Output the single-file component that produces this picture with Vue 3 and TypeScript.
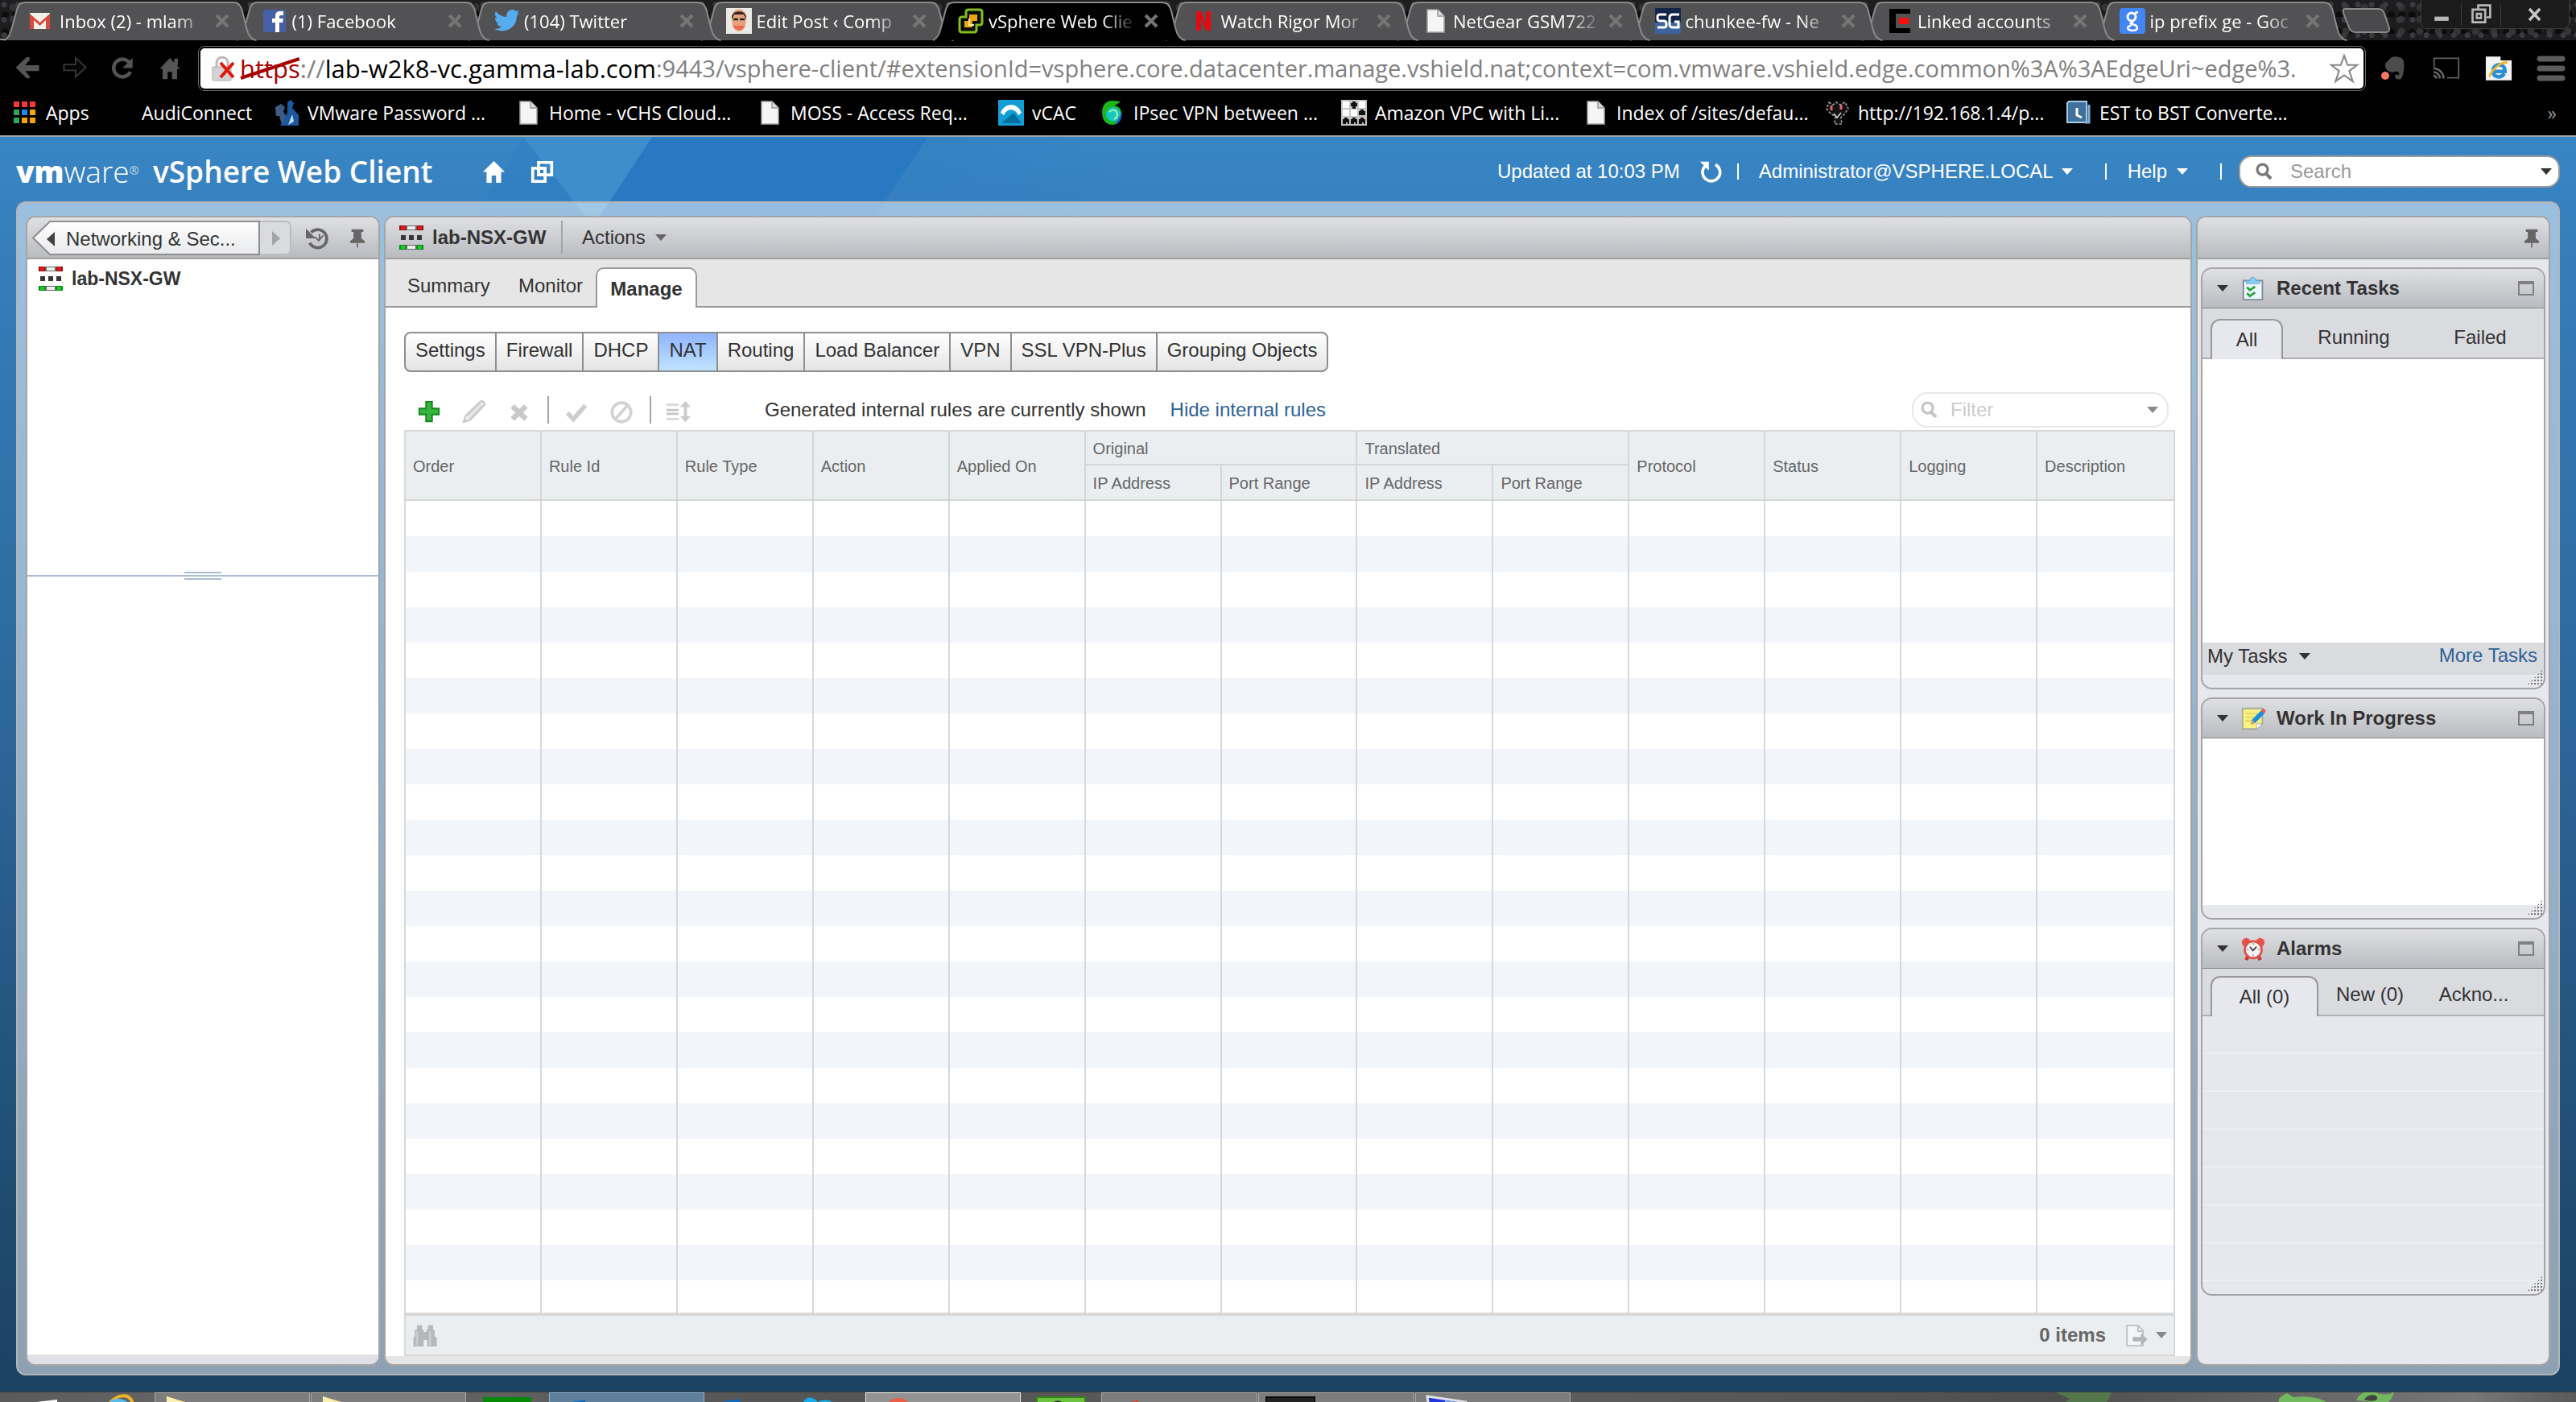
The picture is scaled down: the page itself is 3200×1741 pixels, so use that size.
<script setup lang="ts">
import { ref } from 'vue'

interface BrowserTab { title: string; icon: string; active?: boolean }
interface Bookmark { label: string; icon: string; width: number }
interface TaskItem { width: number; kind: string; icon: string }

const icons: Record<string, string> = {
  gmail: '<rect x="1" y="6" width="25" height="20" fill="#f0efe8"/><path d="M1 26V7l12.500 11L26 7v19h-5V15l-7.500 7L6 15v11z" fill="#d9483b"/>',
  facebook: '<rect x="2" y="2" width="28" height="28" rx="3" fill="#4760a5"/><path d="M17 30V18h-4v-5h4v-3c0-4 2-6 6-6h4v5h-3c-2 0-2 1-2 2v2h5l-1 5h-4v12z" fill="#fff"/>',
  twitter: '<path d="M1 26c4 0 7-1 9-3-3 0-5-2-6-4h3c-3-1-5-3-5-7l3 1C2 10 1 7 3 4c3 4 8 7 13 7 0-9 8-11 12-7l4-1-3 4 3-1-3 4C29 24 15 33 1 26z" fill="#55acee"/>',
  face: '<rect width="32" height="32" fill="#eceae6"/><path d="M7 12c0-14 18-14 18 0l-1 10c-3 9-13 9-16 0z" fill="#e8a07c"/><path d="M7 14C5 1 27 1 25 14l-3-6H10z" fill="#33251f"/><path d="M9 14h6M17 14h6" stroke="#222" stroke-width="2.500"/><path d="M9 22c3 7 11 7 14 0z" fill="#ec6a50"/>',
  vsphere: '<path d="M13 2h14q3 0 3 3v13q0 3-3 3h-4v6q0 3-3 3H5q-3 0-3-3V14q0-3 3-3h5V5q0-3 3-3z" fill="#0c0c0c" stroke="#82bd1d" stroke-width="3"/><path d="M14 8h10v8H14zM8 16h10v8H8z" fill="#f2a40c"/><path d="M14 13v8h6" fill="none" stroke="#fff0b0" stroke-width="2"/>',
  netflix: '<path d="M7 4h6l6 15V4h6v24h-6l-6-15v15H7z" fill="#e50914"/>',
  page: '<path d="M6 2h13l8 8v20H6z" fill="#f5f5f5" stroke="#a5a5a5" stroke-width="1.500"/><path d="M19 2v8h8" fill="#ddd" stroke="#999" stroke-width="1.500"/>',
  sg: '<rect width="32" height="32" fill="#13264a"/><rect y="18" width="32" height="14" fill="#3c63a0"/><path d="M14 8H6q-3 0-3 3v2q0 3 3 3h5q3 0 3 3v2q0 3-3 3H3M30 8h-8q-4 0-4 4v8q0 4 4 4h7v-7h-5" fill="none" stroke="#fff" stroke-width="3"/>',
  linked: '<path d="M3 1h26v6H11v18h18v6H3z" fill="#000"/><rect x="15" y="12" width="12" height="8" fill="#ff0d0d"/>',
  google: '<rect width="32" height="32" rx="4" fill="#4285f4"/><circle cx="15" cy="11" r="5" fill="none" stroke="#fff" stroke-width="3"/><path d="M19 6l4-1M17 16l-3 3 7 3q3 6-5 6-8-1-5-5l4-2" fill="none" stroke="#fff" stroke-width="2.500"/>',
  apps: '<path d="M2 2h7v7H2zM12 2h7v7h-7zM22 2h7v7h-7z" fill="#f4392e"/><path d="M2 12h7v7H2zM2 22h7v7H2z" fill="#2fa45b"/><path d="M12 12h7v7h-7z" fill="#1a87f5"/><path d="M22 12h7v7h-7zM12 22h7v7h-7zM22 22h7v7h-7z" fill="#f7a600"/>',
  blank: '',
  people: '<path d="M2 9l7-4 5 4-2 6 3 4v12h-5L7 20H3z" fill="#3e5b83"/><path d="M17 3l4-3 4 4-2 6 8 9v13H8l6-9 3-8z" fill="#1c58a0"/><path d="M18 31l5-13 2 9z" fill="#c8d8ec"/>',
  vcac: '<rect width="32" height="32" fill="#129fd6"/><path d="M3 16C8 3 24 3 29 16l-4 3c-4-9-14-9-18 0z" fill="#fff"/><path d="M4 29l15-13 10 13z" fill="#056f9f"/>',
  ball: '<path d="M16 1C3 1 2 14 4 22c3 11 18 12 22 2 4-8-1-18-8-16l8-6z" fill="#18b818"/><circle cx="17" cy="18" r="9" fill="#15c7c0"/><path d="M27 15c2 8-3 15-9 16 4-4 6-8 9-16z" fill="#215bd8"/><path d="M12 15q6-5 9 0t-3 9" fill="none" stroke="#a8f5a0" stroke-width="2"/>',
  amazon: '<rect width="32" height="32" fill="#c4c4c4"/><path d="M2 2h8v8H2zM22 2h8v8h-8zM2 12h8v8H2zM12 12h8v8h-8z" fill="#fff"/><path d="M12 4h2V2h4v2h2v4h-2v3h-4V8h-2zM22 14h2v-2h4v2h2v5h-8zM2 24h2v-2h4v2h2v6H8v-2H6v2H2zM12 24h2v-2h4v2h2v6h-2v-2h-2v2h-4zM22 24h2v-2h4v2h2v6h-2v-2h-2v2h-4z" fill="#111"/>',
  thorn: '<path d="M6 3l5 3 4-3 5 3 6-3 4 8-5 7-4 4 1 8h-9l1-9-6-4-5-6z" fill="#141111" stroke="#aaa" stroke-width="1.500" stroke-dasharray="3 2"/><path d="M9 7v6M21 6v6" stroke="#e06a6a" stroke-width="3"/><path d="M12 17l4 5 5-6" fill="none" stroke="#ddd" stroke-width="1.500"/>',
  clock: '<path d="M4 2h22v26H2V4z" fill="#40719c" stroke="#a5cbea" stroke-width="2"/><path d="M14 10v9l6 3" fill="none" stroke="#fff" stroke-width="3"/><path d="M24 28h5V6" fill="none" stroke="#7fb0dc" stroke-width="3"/>',
  edge: '<path d="M0 0h30v6H0z" fill="#8c1410"/><path d="M2 1h5v4H2zM23 1h5v4h-5z" fill="#f21313"/><path d="M8 0h14v6H8z" fill="#666"/><path d="M10 1h10v4H10z" fill="#eee"/><path d="M2 12h6v6H2zM12 12h6v6h-6zM22 12h6v6h-6z" fill="#363636"/><path d="M0 24h30v6H0z" fill="#088a12"/><path d="M2 25h5v4H2zM23 25h5v4h-5z" fill="#0fd321"/><path d="M8 24h14v6H8z" fill="#666"/><path d="M10 25h10v4H10z" fill="#eee"/>',
  tasks: '<path d="M3 5h26v26H3z" fill="#eaf5fd" stroke="#7f8a94" stroke-width="2"/><path d="M7 9V5h5c0-6 8-6 8 0h5v4z" fill="#8dcdf3" stroke="#559fce"/><path d="M8 14l4 4 7-5M8 22l4 4 7-5" fill="none" stroke="#29a336" stroke-width="3"/>',
  note: '<path d="M2 2h27v20l-8 8H2z" fill="#fbf37f" stroke="#a9a9a0" stroke-width="2"/><path d="M6 9h16M6 14h12M6 19h9" stroke="#ded36c" stroke-width="2"/><path d="M21 30v-7h8z" fill="#fff" stroke="#aaa"/><path d="M13 24l2-7L27 5l5 4-13 13z" fill="#1d8edd"/><path d="M27 5l3-3 4 3-2 4z" fill="#e3576c"/><path d="M13 24l2-7 4 5z" fill="#d9a469"/>',
  alarm: '<circle cx="7" cy="7" r="6" fill="#e8514c"/><circle cx="26" cy="7" r="6" fill="#e8514c"/><path d="M7 31l3-7M26 31l-3-7" stroke="#c53c37" stroke-width="5"/><circle cx="16.500" cy="17" r="13" fill="#e0504a"/><circle cx="16.500" cy="17" r="10" fill="#f7f4f2"/><path d="M12 13l4 5 5-5" fill="none" stroke="#444" stroke-width="2"/><path d="M16.500 8v2M16.500 24v2M8 17h2M23 17h2" stroke="#777" stroke-width="1.500"/>',
  search: '<circle cx="13" cy="13" r="8" fill="none" stroke="currentColor" stroke-width="4"/><path d="M18 19l8 8" stroke="currentColor" stroke-width="5"/>',
  pin: '<path d="M7 2h18v4h-3v10l5 4v3H5v-3l5-4V6H7z" fill="#666"/><path d="M15 23h2v7h-2z" fill="#666"/>',
  history: '<path d="M7 8a12 12 0 1 1-2 14" fill="none" stroke="#666" stroke-width="4"/><path d="M0 3v13h13z" fill="#666"/><path d="M18 10v8M12 14l5 5 6-7" fill="none" stroke="#666" stroke-width="2"/>',
  plus: '<path d="M12 3h8v9h9v8h-9v9h-8v-9H3v-8h9z" fill="#35b53c" stroke="#12861c" stroke-width="2"/>',
  pencil: '<path d="M2 30l3-9L24 3q3-2 5 1 2 2 0 4L11 27z" fill="#eee" stroke="#c5c5c5" stroke-width="2"/><path d="M7 22L25 5M10 25L27 8" stroke="#d0d0d0" stroke-width="1.500"/>',
  cross: '<path d="M7 9l18 17M25 9L7 26" stroke="#c9c9c9" stroke-width="7"/>',
  check: '<path d="M4 18l8 8L28 8" fill="none" stroke="#cdcdcd" stroke-width="6"/>',
  ban: '<circle cx="16" cy="17" r="12.500" fill="none" stroke="#d2d2d2" stroke-width="4"/><path d="M8 26L24 8" stroke="#d2d2d2" stroke-width="4"/>',
  sort: '<path d="M0 7h16M0 26h16" stroke="#d8d8d8" stroke-width="3"/><path d="M0 14h16M0 19h16" stroke="#c4c4c4" stroke-width="3"/><path d="M25 2l7 8h-5v12h5l-7 8-7-8h5V10h-5z" fill="#cbcbcb"/>',
  binoculars: '<path d="M5 2h7v6h2v3h4V8h2V2h7v6h2v10h3v13H19v-9h-5v9H0V18h2V8h3z" fill="#b5b7b9"/><path d="M5 10v20M23 10v20" stroke="#cacccd" stroke-width="3"/>',
  export: '<path d="M3 2h15l7 7v21H3z" fill="#f4f5f6" stroke="#bdbfc1" stroke-width="2"/><path d="M18 2v8h7" fill="none" stroke="#bdbfc1" stroke-width="2"/><path d="M11 18h11v-5l9 8-9 9v-6H11z" fill="#b2b4b6"/>',
  back: '<path d="M0 14L15 0h4v4l-6 7h19v8H13l6 7v3h-4z" fill="#555"/>',
  forward: '<path d="M31 14L17 1v9H1v8h16v9z" fill="#050505" stroke="#383838" stroke-width="2"/>',
  reload: '<path d="M26 8A12 12 0 1 0 27 20" fill="none" stroke="#545454" stroke-width="5"/><path d="M30 1v14H16z" fill="#545454"/>',
  home: '<path d="M16 1l14 15h-4v14h-7V20h-6v10H6V16H2z" fill="currentColor"/><path d="M22 2h5v9h-5z" fill="currentColor"/>',
  lock: '<path d="M8 15V9c0-9 14-9 14 0v6" fill="none" stroke="#b9b9b9" stroke-width="3"/><rect x="3" y="14" width="23" height="17" rx="1" fill="#d3d3d3" stroke="#aaa"/><path d="M13 9l16 18M29 9L13 27" stroke="#e2150c" stroke-width="4"/>',
  star: '<path d="M16 1l4 11h11l-9 7 4 12-10-7-10 7 4-12-9-7h11z" fill="#fff" stroke="#888" stroke-width="2"/>',
  elephant: '<path d="M5 10l8-8c6-2 14 0 15 5 1 7 0 14-2 20-2 4-9 3-9-1 0-3 4-3 4-1 4-5-2-6-4-5-4 2-13 0-12-10z" fill="#4c4c4c"/><circle cx="5" cy="25" r="5" fill="#f27a62"/>',
  cast: '<path d="M2 14V2h34v27H20" fill="none" stroke="#606060" stroke-width="2"/><path d="M1 16a14 14 0 0 1 14 14M1 21a9 9 0 0 1 9 9M1 26a4 4 0 0 1 4 4" fill="none" stroke="#666" stroke-width="3"/>',
  ie: '<path d="M1 0h20v5h15v27H1z" fill="#f3f3f3"/><path d="M10 20h17c0-12-16-12-16 0 0 8 11 10 15 3" fill="none" stroke="#2a8ed8" stroke-width="5"/><path d="M7 27C4 24 20 6 30 8" fill="none" stroke="#f3b51e" stroke-width="3"/>',
  menu: '<path d="M2 4h28M2 16h28M2 28h28" stroke="#5c5c5c" stroke-width="7" stroke-linecap="round"/>',
  windows: '<path d="M11 3h18v17H11z" fill="none" stroke="#fff" stroke-width="4"/><path d="M3 11h17v18H3z" fill="none" stroke="#fff" stroke-width="4"/><path d="M11 11h9v9h-9z" fill="none" stroke="#fff" stroke-width="4"/>',
  refresh: '<path d="M22 6a12 12 0 1 1-14 2" fill="none" stroke="#fff" stroke-width="4"/><path d="M1 2h12v12z" fill="#fff"/>',
  restore: '<path d="M12 8V3h17v17h-5M4 9h18v18H4zM10 15h6v6h-6z" fill="none" stroke="#b9b9b9" stroke-width="3"/>',
  tStart: '<path d="M45 12l26-3v8H40z" fill="#fff"/>',
  tIe: '<path d="M40 15C50 2 66 0 70 14" fill="none" stroke="#efb32a" stroke-width="4"/><path d="M40 16c6-8 18-8 24 0" fill="none" stroke="#54bdee" stroke-width="4"/>',
  tFolder: '<path d="M14 4l37 11v5H14z" fill="#f1e08c"/><path d="M14 4l24 9v4H14z" fill="#faf0b4"/>',
  tStore: '<path d="M21 6h60v12H21z" fill="#048a04"/><path d="M46 12h6v6h-6z" fill="#fff"/>',
  tMail: '<path d="M16 13l28-5v9H16z" fill="#0a6cc2"/>',
  tCloud: '<path d="M22 17c4-14 14-12 20-5 10-5 20-2 22 6z" fill="#13adee"/>',
  tChrome: '<circle cx="40" cy="22" r="16" fill="#ef5b47"/>',
  tEver: '<path d="M20 6h60v12H20z" fill="#6cc33c" stroke="#3a7f20" stroke-width="2"/><path d="M38 18c0-10 16-10 16 0z" fill="#222"/>',
  tOffice: '<path d="M22 13l23-4v8H22z" fill="#d8432a"/>',
  tDark: '<path d="M9 5h60v12H9z" fill="#222" stroke="#0c0c0c" stroke-width="2"/>',
  tPc: '<path d="M14 4l48 7v8H16z" fill="#1f35dd" stroke="#e3e3e3" stroke-width="3"/><path d="M36 9l24 3v8H36z" fill="#7fa4ef"/>',
}

const tabs: BrowserTab[] = [
  { title: 'Inbox (2) - mlam', icon: 'gmail' },
  { title: '(1) Facebook', icon: 'facebook' },
  { title: '(104) Twitter', icon: 'twitter' },
  { title: 'Edit Post ‹ Comp', icon: 'face' },
  { title: 'vSphere Web Clie', icon: 'vsphere', active: true },
  { title: 'Watch Rigor Mor', icon: 'netflix' },
  { title: 'NetGear GSM722', icon: 'page' },
  { title: 'chunkee-fw - Ne', icon: 'sg' },
  { title: 'Linked accounts', icon: 'linked' },
  { title: 'ip prefix ge - Goc', icon: 'google' },
]

const bookmarks: Bookmark[] = [
  { label: 'Apps', icon: 'apps', width: 119 },
  { label: 'AudiConnect', icon: 'blank', width: 206 },
  { label: 'VMware Password ...', icon: 'people', width: 300 },
  { label: 'Home - vCHS Cloud...', icon: 'page', width: 300 },
  { label: 'MOSS - Access Req...', icon: 'page', width: 300 },
  { label: 'vCAC', icon: 'vcac', width: 126 },
  { label: 'IPsec VPN between ...', icon: 'ball', width: 300 },
  { label: 'Amazon VPC with Li...', icon: 'amazon', width: 300 },
  { label: 'Index of /sites/defau...', icon: 'page', width: 300 },
  { label: 'http://192.168.1.4/p...', icon: 'thorn', width: 300 },
  { label: 'EST to BST Converte...', icon: 'clock', width: 300 },
]

const taskbar: TaskItem[] = [
  { width: 95, kind: 'plain', icon: 'tStart' },
  { width: 97, kind: 'plain', icon: 'tIe' },
  { width: 193, kind: 'open', icon: 'tFolder' },
  { width: 193, kind: 'open', icon: 'tFolder' },
  { width: 103, kind: 'plain', icon: 'tStore' },
  { width: 193, kind: 'open blue', icon: 'tMail' },
  { width: 99, kind: 'plain', icon: 'tMail' },
  { width: 101, kind: 'plain', icon: 'tCloud' },
  { width: 193, kind: 'open lit', icon: 'tChrome' },
  { width: 100, kind: 'plain', icon: 'tEver' },
  { width: 194, kind: 'open', icon: 'tOffice' },
  { width: 194, kind: 'open', icon: 'tDark' },
  { width: 193, kind: 'open', icon: 'tPc' },
]

const sections = ['Settings', 'Firewall', 'DHCP', 'NAT', 'Routing', 'Load Balancer', 'VPN', 'SSL VPN-Plus', 'Grouping Objects']
const section = ref('NAT')
const urlRest = ref(':9443/vsphere-client/#extensionId=vsphere.core.datacenter.manage.vshield.nat;context=com.vmware.vshield.edge.common%3A%3AEdgeUri~edge%3.')
</script>

<template>
  <div class="screen">
    <header class="chrome">
      <div class="strip">
        <div class="tabs">
          <button v-for="(t, i) in tabs" :key="t.title" class="tab" :class="{ active: t.active }" :style="{ zIndex: t.active ? 20 : 10 - i }">
            <svg class="shape" viewBox="0 0 314 50" preserveAspectRatio="none">
              <path d="M0 50C6 47 8 42 10 34L16 12C18 5 20 3 27 3H284C291 3 293 5 296 12L302 36C304 44 307 49 314 50" />
            </svg>
            <svg class="i32" viewBox="0 0 32 32" v-html="icons[t.icon]"></svg>
            <span class="tab-title">{{ t.title }}</span>
            <svg class="close" viewBox="0 0 18 18"><path d="M2 2L16 16M16 2L2 16" /></svg>
          </button>
        </div>
        <div class="win">
          <svg class="newtab" viewBox="0 0 64 32"><path d="M5 1H46Q52 1 54 7L60 25Q61 30 56 30H18Q12 30 10 24L3 6Q2 1 5 1" /></svg>
          <div class="win-buttons">
            <button aria-label="Minimize"><svg viewBox="0 0 32 32"><path d="M6 22h20" stroke="#b9b9b9" stroke-width="6" /></svg></button>
            <button aria-label="Restore"><svg viewBox="0 0 32 32" v-html="icons.restore"></svg></button>
            <button aria-label="Close"><svg viewBox="0 0 32 32"><path d="M8 8l15 16M23 8L8 24" stroke="#c4c4c4" stroke-width="4" /></svg></button>
          </div>
        </div>
      </div>
      <div class="toolbar">
        <button class="nav" aria-label="Back"><svg viewBox="0 0 32 32" v-html="icons.back"></svg></button>
        <button class="nav" aria-label="Forward"><svg viewBox="0 0 32 32" v-html="icons.forward"></svg></button>
        <button class="nav" aria-label="Reload"><svg viewBox="0 0 32 32" v-html="icons.reload"></svg></button>
        <button class="nav" aria-label="Home"><svg viewBox="0 0 32 32" v-html="icons.home"></svg></button>
        <div class="omnibox">
          <svg class="i32" viewBox="0 0 32 32" v-html="icons.lock"></svg>
          <span class="scheme">https<svg viewBox="0 0 70 28" preserveAspectRatio="none"><path d="M1 26L69 2" /></svg></span>
          <span class="sep">://</span>
          <span class="host">lab-w2k8-vc.gamma-lab.com</span>
          <input v-model="urlRest" class="rest" aria-label="Address" />
          <svg class="star" viewBox="0 0 32 32" v-html="icons.star"></svg>
        </div>
        <div class="exts">
          <svg viewBox="0 0 32 32" v-html="icons.elephant"></svg>
          <svg viewBox="0 0 38 32" v-html="icons.cast"></svg>
          <svg viewBox="0 0 37 32" v-html="icons.ie"></svg>
          <svg viewBox="0 0 32 32" v-html="icons.menu"></svg>
        </div>
      </div>
      <nav class="bookmarks">
        <a v-for="b in bookmarks" :key="b.label" href="#" :style="{ width: b.width + 'px' }">
          <svg class="i32" viewBox="0 0 32 32" v-html="icons[b.icon]"></svg>{{ b.label }}
        </a>
        <button class="more">»</button>
      </nav>
    </header>

    <main class="app">
      <svg class="rays" viewBox="0 0 1400 108" preserveAspectRatio="none">
        <defs>
          <linearGradient id="fade"><stop stop-color="#2f7dc2" /><stop offset="1" stop-color="#2f7dc2" stop-opacity="0" /></linearGradient>
        </defs>
        <path d="M1080 0H1400V108H1080z" fill="url(#fade)" opacity=".5" />
        <path d="M810 0H1153L1080 108H740z" fill="#2979c2" />
        <path d="M650 0L585 108H735z" fill="#2b7cc2" opacity=".35" />
        <path d="M650 0H810L738 108H735z" fill="#3f8ecc" />
      </svg>
      <div class="brand">
        <span class="logo"><b>vm</b>ware<sup>®</sup></span>
        <span class="product">vSphere Web Client</span>
        <button class="hi" aria-label="Home"><svg viewBox="0 0 32 32"><path d="M16 1l15 15h-5v15h-7V21h-6v10H6V16H1z" fill="#fff" /></svg></button>
        <button class="hi" aria-label="Windows"><svg viewBox="0 0 32 32" v-html="icons.windows"></svg></button>
        <div class="account">
          <span>Updated at 10:03 PM</span>
          <button class="hi refresh" aria-label="Refresh"><svg viewBox="0 0 32 32" v-html="icons.refresh"></svg></button>
          <i class="bar"></i>
          <button class="drop user">Administrator@VSPHERE.LOCAL<svg class="arr" viewBox="0 0 14 8"><path d="M0 0h14l-7 8z" /></svg></button>
          <i class="bar"></i>
          <button class="drop help">Help<svg class="arr" viewBox="0 0 14 8"><path d="M0 0h14l-7 8z" /></svg></button>
          <i class="bar"></i>
        </div>
        <label class="search">
          <svg viewBox="0 0 32 32" v-html="icons.search"></svg>
          <input placeholder="Search" aria-label="Search" />
          <svg class="arr" viewBox="0 0 14 8"><path d="M0 0h14l-7 8z" /></svg>
        </label>
      </div>

      <div class="frame">
        <aside class="panel left">
          <div class="head">
            <div class="crumb">
              <svg class="crumb-shape" viewBox="0 0 322 44" preserveAspectRatio="none">
                <defs><linearGradient id="cg" x2="0" y2="1"><stop stop-color="#fff" /><stop offset="1" stop-color="#e8e9eb" /></linearGradient></defs>
                <path d="M282 1H314Q321 1 321 8V35Q321 42 314 42H282z" fill="#d9dbdf" stroke="#bcbdc1" stroke-width="2" />
                <path d="M282 1H22L1 21.500L22 42H282z" fill="url(#cg)" stroke="#8d8d8d" stroke-width="2" />
              </svg>
              <button class="back"><svg viewBox="0 0 10 18"><path d="M10 0v18L0 9z" /></svg>Networking &amp; Sec...</button>
              <button class="next" aria-label="Forward"><svg viewBox="0 0 10 18"><path d="M0 0v18l10-9z" /></svg></button>
            </div>
            <button class="hist" aria-label="History"><svg viewBox="0 0 32 32" v-html="icons.history"></svg></button>
            <button class="pin" aria-label="Pin"><svg viewBox="0 0 32 32" v-html="icons.pin"></svg></button>
          </div>
          <div class="tree">
            <a href="#"><svg class="i30" viewBox="0 0 30 30" v-html="icons.edge"></svg>lab-NSX-GW</a>
          </div>
          <div class="splitter"><i></i></div>
          <div class="below"></div>
          <div class="foot"></div>
        </aside>

        <section class="panel center">
          <div class="head">
            <svg class="i30" viewBox="0 0 30 30" v-html="icons.edge"></svg>
            <h1>lab-NSX-GW</h1>
            <button class="drop actions">Actions<svg class="arr" viewBox="0 0 14 8"><path d="M0 0h14l-7 8z" /></svg></button>
          </div>
          <nav class="main-tabs">
            <button>Summary</button><button>Monitor</button><button class="on">Manage</button><i></i>
          </nav>
          <div class="content">
            <div class="sections">
              <button v-for="s in sections" :key="s" :class="{ on: s === section }" @click="section = s">{{ s }}</button>
            </div>
            <div class="tools">
              <button aria-label="Add"><svg viewBox="0 0 32 32" v-html="icons.plus"></svg></button>
              <button aria-label="Edit"><svg viewBox="0 0 32 32" v-html="icons.pencil"></svg></button>
              <button aria-label="Delete"><svg viewBox="0 0 32 32" v-html="icons.cross"></svg></button>
              <i></i>
              <button aria-label="Enable"><svg viewBox="0 0 32 32" v-html="icons.check"></svg></button>
              <button aria-label="Disable"><svg viewBox="0 0 32 32" v-html="icons.ban"></svg></button>
              <i></i>
              <button aria-label="Reorder"><svg viewBox="0 0 32 32" v-html="icons.sort"></svg></button>
              <span class="msg">Generated internal rules are currently shown</span>
              <a href="#">Hide internal rules</a>
              <label class="filter">
                <svg viewBox="0 0 32 32" v-html="icons.search"></svg>
                <input placeholder="Filter" aria-label="Filter" />
                <svg class="arr" viewBox="0 0 14 8"><path d="M0 0h14l-7 8z" /></svg>
              </label>
            </div>
            <div class="grid">
              <div class="rows">
                <table>
                  <thead>
                    <tr>
                      <th rowspan="2">Order</th><th rowspan="2">Rule Id</th><th rowspan="2">Rule Type</th>
                      <th rowspan="2">Action</th><th rowspan="2">Applied On</th>
                      <th colspan="2">Original</th><th colspan="2">Translated</th>
                      <th rowspan="2">Protocol</th><th rowspan="2">Status</th><th rowspan="2">Logging</th><th rowspan="2" class="last">Description</th>
                    </tr>
                    <tr><th>IP Address</th><th>Port Range</th><th>IP Address</th><th>Port Range</th></tr>
                  </thead>
                  <tbody>
                    <tr v-for="r in 23" :key="r"><td v-for="c in 13" :key="c"></td></tr>
                  </tbody>
                </table>
              </div>
              <div class="grid-foot">
                <button aria-label="Find"><svg viewBox="0 0 32 32" v-html="icons.binoculars"></svg></button>
                <strong>0 items</strong>
                <button class="exp" aria-label="Export"><svg viewBox="0 0 32 32" v-html="icons.export"></svg><svg class="arr" viewBox="0 0 14 8"><path d="M0 0h14l-7 8z" /></svg></button>
              </div>
            </div>
          </div>
          <div class="foot"></div>
        </section>

        <aside class="panel right">
          <div class="head"><button class="pin" aria-label="Pin"><svg viewBox="0 0 32 32" v-html="icons.pin"></svg></button></div>
          <div class="portlets">
            <section class="portlet tasks">
              <h2><svg class="arr" viewBox="0 0 14 8"><path d="M0 0h14l-7 8z" /></svg><svg class="i32" viewBox="0 0 34 32" v-html="icons.tasks"></svg>Recent Tasks<i class="max"></i></h2>
              <div class="ptabs three"><button class="on">All</button><button>Running</button><button>Failed</button><i></i></div>
              <div class="white"></div>
              <div class="links"><button class="drop">My Tasks<svg class="arr" viewBox="0 0 14 8"><path d="M0 0h14l-7 8z" /></svg></button><a href="#">More Tasks</a></div>
              <div class="grip"><i></i></div>
            </section>
            <section class="portlet work">
              <h2><svg class="arr" viewBox="0 0 14 8"><path d="M0 0h14l-7 8z" /></svg><svg class="i32" viewBox="0 0 34 32" v-html="icons.note"></svg>Work In Progress<i class="max"></i></h2>
              <div class="white"></div>
              <div class="grip"><i></i></div>
            </section>
            <section class="portlet alarms">
              <h2><svg class="arr" viewBox="0 0 14 8"><path d="M0 0h14l-7 8z" /></svg><svg class="i32" viewBox="0 0 34 32" v-html="icons.alarm"></svg>Alarms<i class="max"></i></h2>
              <div class="ptabs wide"><button class="on">All (0)</button><button>New (0)</button><button>Ackno...</button><i></i></div>
              <div class="lines"></div>
              <div class="grip"><i></i></div>
            </section>
          </div>
        </aside>
      </div>
    </main>

    <footer class="taskbar">
      <button v-for="(t, i) in taskbar" :key="i" :class="t.kind" :style="{ width: t.width + 'px' }" aria-label="Window">
        <svg viewBox="0 0 100 13" v-html="icons[t.icon]"></svg>
      </button>
      <svg class="splash" viewBox="0 0 700 13">
        <path d="M60 0h70l-6 13H72l6-5z" fill="#55804c" opacity=".8" />
        <path d="M338 13c-2-6 4-9 10-12l8 5c14-2 34 0 42 7zM434 10c4-10 16-14 24-10 10 5 22 2 24-2-4 10-6 16-16 15z" fill="#72b85c" />
        <path d="M444 9c2-6 14-8 16-3s-8 6-16 3" fill="#444" />
      </svg>
    </footer>
  </div>
</template>

<style>
body { margin: 0; background: #000; overflow: hidden; }
</style>

<style scoped>
* { box-sizing: border-box; }
button { background: none; border: 0; padding: 0; margin: 0; font: inherit; color: inherit; text-align: left; }
input { border: 0; background: none; padding: 0; font: inherit; color: inherit; min-width: 0; outline: 0; }
a { text-decoration: none; color: inherit; }
svg { display: block; flex: none; overflow: visible; }
.i32 { width: 32px; height: 32px; }
.i30 { width: 30px; height: 30px; }
.arr { width: 14px; height: 8px; fill: currentColor; }

.screen { height: 100vh; min-height: 1000px; display: flex; flex-direction: column; font: 24px/28px "Liberation Sans", Arial, sans-serif; color: #333; overflow: hidden; }

/* browser */
.chrome { flex: none; background: #000; color: #fff; font: 23px/32px "Open Sans", "Noto Sans", sans-serif; border-bottom: 2px solid #a5a5a5; }
.strip { height: 50px; display: flex; background-color: #1d1c1e; background-image: radial-gradient(circle at 30% 30%, #3b3a3c 0 3px, transparent 4px), radial-gradient(circle at 70% 60%, #343335 0 4px, transparent 5px), radial-gradient(circle at 50% 90%, #0c0c0d 0 4px, transparent 5px); background-size: 17px 19px, 23px 15px, 13px 21px; }
.tabs { flex: 1; display: flex; padding-left: 5px; box-shadow: inset 0 -2px #8e8e8e; }
.tab { flex: 1 1 0; min-width: 0; position: relative; isolation: isolate; display: flex; align-items: center; padding: 2px 0 0 31px; }
.shape { position: absolute; left: 0; top: 0; width: calc(100% + 25px); height: 50px; z-index: -1; fill: #525254; stroke: #8a8a8a; stroke-width: 2; }
.tab.active .shape { fill: #000; }
.tab-title { margin-left: 6px; width: 182px; font-size: 22px; white-space: nowrap; mask-image: linear-gradient(90deg, #000 78%, transparent 102%); }
.close { width: 18px; height: 18px; margin-left: 11px; stroke: #757575; stroke-width: 4; }
.win { width: 310px; display: flex; justify-content: space-between; align-items: flex-start; }
.newtab { width: 64px; height: 32px; margin: 10px 0 0 18px; fill: #4a4a4c; stroke: #8a8a8a; stroke-width: 2; }
.win-buttons { display: flex; width: 185px; height: 36px; margin-right: 8px; background: #1b1b1c; border: 1px solid #39393b; border-top: 0; border-radius: 0 0 8px 8px; align-items: center; }
.win-buttons button { width: 49px; display: flex; justify-content: center; }
.win-buttons button:last-child { flex: 1; }
.win-buttons button + button { border-left: 1px solid #39393b; }
.win-buttons svg { width: 28px; height: 28px; }
.toolbar { height: 66px; display: flex; align-items: center; padding: 4px 14px 0 18px; color: #555; }
.nav { width: 34px; margin-right: 25px; }
.nav svg { width: 32px; height: 29px; }
.nav:nth-child(4) { margin-right: 18px; }
.omnibox { flex: 1; min-width: 0; height: 54px; display: flex; align-items: center; background: #fff; border: 2px solid #000; outline: 1px solid #6d6d6d; border-radius: 7px; padding: 0 6px 0 12px; font-size: 31px; line-height: 44px; color: #808080; }
.scheme { position: relative; margin-left: 5px; color: #a80000; }
.scheme svg { position: absolute; left: 0; top: 8px; width: 100%; height: 28px; stroke: #a80000; stroke-width: 4; }
.host { color: #000; }
.rest { flex: 1; height: 44px; font-size: 29px; color: #808080; }
.star { width: 36px; height: 34px; margin-left: 6px; }
.exts { display: flex; align-items: center; gap: 31px; margin-left: 19px; }
.exts svg { height: 32px; width: 34px; }
.bookmarks { height: 52px; display: flex; align-items: center; padding: 0 24px 4px 15px; }
.bookmarks a { display: flex; align-items: center; gap: 10px; flex: none; white-space: nowrap; }
.more { margin-left: auto; color: #999; }

/* application */
.app { flex: 1; min-height: 0; position: relative; isolation: isolate; display: flex; flex-direction: column; padding: 0 20px 20px; background: linear-gradient(#3986c5, #3680be 6%, #2c6699 48%, #1f4b70 85%, #1c4263); }
.rays { position: absolute; z-index: -1; left: 0; top: 0; width: 1400px; height: 108px; }
.brand { height: 80px; flex: none; display: flex; align-items: center; color: #fff; padding-top: 6px; }
.logo { font: 300 37px/44px "Open Sans", sans-serif; width: 170px; white-space: nowrap; }
.logo b { font-weight: 800; }
.logo sup { font-size: 14px; line-height: 14px; vertical-align: 10px; }
.product { font: 600 37px/44px "Open Sans", sans-serif; width: 409px; white-space: nowrap; }
.hi { margin-right: 31px; }
.hi svg { width: 29px; height: 29px; }
.account { margin-left: auto; display: flex; align-items: center; }
.refresh { margin: 0 18px 0 24px; }
.bar { width: 2px; height: 20px; background: #fff; }
.drop { display: flex; align-items: center; gap: 12px; }
.user { margin: 0 38px 0 25px; }
.user { gap: 10px; padding-right: 2px; }
.help { margin: 0 40px 0 26px; }
.search { display: flex; align-items: center; width: 399px; height: 40px; margin-left: 21px; padding: 0 8px 0 16px; background: #fff; border: 2px solid #9a9a9a; border-radius: 16px; color: #777; }
.search > svg:first-child { width: 28px; height: 26px; }
.search input { flex: 1; margin-left: 18px; }
.search .arr { color: #333; }
input::placeholder { color: #999; opacity: 1; }

.frame { flex: 1; min-height: 0; display: flex; gap: 5px; padding: 16px 10px 10px; border: 2px solid #b4b5b6; border-radius: 12px; background: rgba(255, 255, 255, .5); }
.panel { display: flex; flex-direction: column; min-height: 0; border: 2px solid #a5a5a5; border-radius: 12px; overflow: hidden; background: #fff; }
.head { height: 52px; flex: none; display: flex; align-items: center; background: linear-gradient(#dfe0e3, #b9bbc0); border-bottom: 2px solid #a0a0a0; }
.left { width: 440px; flex: none; }
.left .head { padding-top: 2px; }
.crumb { position: relative; isolation: isolate; display: flex; width: 322px; height: 44px; margin-left: 6px; }
.crumb-shape { position: absolute; inset: 0; width: 100%; height: 100%; z-index: -1; }
.back { width: 282px; display: flex; align-items: center; gap: 14px; padding: 2px 0 0 18px; }
.back svg, .next svg { width: 10px; height: 18px; fill: #444; }
.next { padding-left: 16px; }
.next svg { fill: #a3a4a7; }
.hist { margin-left: 17px; }
.hist svg { width: 32px; height: 30px; }
.pin svg { width: 26px; height: 28px; }
.left .pin { margin-left: 20px; }
.tree { height: 388px; flex: none; padding: 9px 14px; }
.tree a { display: flex; align-items: center; gap: 11px; font-size: 23px; font-weight: bold; }
.splitter { height: 10px; flex: none; display: flex; justify-content: center; background: linear-gradient(#a9bdd9, #a9bdd9) 0 4px / 100% 2px no-repeat; }
.splitter i { width: 46px; border: solid #a9bdd9; border-width: 2px 0; background: linear-gradient(#fff 2px, #a9bdd9 2px 4px, #fff 4px); }
.below { flex: 1; }
.left .foot { height: 12px; background: #dfe1e6; }

.center { flex: 1; min-width: 0; }
.center .head { padding-left: 17px; }
h1 { margin: 0 0 0 11px; font: bold 24px/28px "Liberation Sans", Arial, sans-serif; width: 160px; }
.actions { height: 42px; padding-left: 24px; border-left: 2px solid #a4a5a8; }
.center .arr { color: #666; }
.main-tabs { height: 60px; flex: none; display: flex; align-items: flex-end; background: #e6e6e6; }
.main-tabs button, .main-tabs i { height: 50px; padding-bottom: 2px; border-bottom: 2px solid #999; }
.main-tabs button:first-child { padding-left: 27px; width: 165px; }
.main-tabs button:nth-child(2) { width: 96px; }
.main-tabs .on { width: 126px; padding: 2px 0 0; text-align: center; font-weight: bold; background: #fff; border: 2px solid #999; border-bottom: 0; border-radius: 10px 10px 0 0; }
.main-tabs i { flex: 1; }
.content { flex: 1; min-height: 0; display: flex; flex-direction: column; padding: 30px 19px 0 23px; }
.sections { display: flex; flex: none; align-self: flex-start; height: 50px; border: 2px solid #8e8e8e; border-radius: 8px; overflow: hidden; background: linear-gradient(#fff, #e4e4e4); }
.sections button { padding: 0 12px 4px; white-space: nowrap; }
.sections button + button { border-left: 2px solid #8e8e8e; }
.sections .on { background: linear-gradient(#8fb4ff, #c0e4ff); }
.tools { height: 72px; flex: none; display: flex; align-items: center; padding: 22px 8px 0 16px; }
.tools button { width: 32px; margin-right: 24px; }
.tools button svg { width: 30px; height: 30px; margin-top: 3px; }
.tools i { width: 2px; height: 34px; background: #a5a5a8; margin-right: 19px; margin-left: -6px; }
.msg { margin-left: 66px; margin-right: 30px; }
.tools a, .links a { color: #2f6298; }
.filter { margin-left: auto; display: flex; align-items: center; width: 319px; height: 44px; padding: 0 11px 0 7px; border: 2px solid #e8e8e8; border-radius: 20px; color: #c6c6c6; }
.filter > svg:first-child { width: 26px; height: 26px; }
.filter input { flex: 1; margin-left: 13px; }
.filter input::placeholder { color: #ccc; }
.filter .arr { color: #8a8a8a; }
.grid { flex: 1; min-height: 0; display: flex; flex-direction: column; border: 2px solid #d8d8d8; }
.rows { flex: 1; min-height: 0; overflow: hidden; }
table { width: 100%; table-layout: fixed; border-collapse: separate; border-spacing: 0; }
th { padding: 2px 0 0 9px; font: 20px/24px "Liberation Sans", Arial, sans-serif; text-align: left; color: #666; background: #eaeef1; border-right: 2px solid #d5d5d5; border-bottom: 2px solid #d5d5d5; white-space: nowrap; }
thead tr:first-child { height: 42px; }
thead tr + tr { height: 44px; }
td { height: 44px; padding: 0; border-right: 2px solid #d8d8d8; }
th.last, td:last-child { border-right: 0; }
tbody tr:nth-child(even) td { background: #f2f6fb; }
.grid-foot { height: 52px; flex: none; display: flex; align-items: center; padding: 0 8px; background: #eaeef1; border-top: 4px solid #d8d8d8; color: #666; }
.grid-foot > button svg:first-child { width: 32px; height: 29px; }
.grid-foot strong { margin-left: auto; }
.exp { display: flex; align-items: center; gap: 8px; margin-left: 22px; }
.exp .arr { color: #888; }
.center .foot { height: 10px; flex: none; background: #e6e6e6; }

.right { width: 440px; flex: none; background: #e7e8ed; }
.right .head { justify-content: flex-end; padding: 2px 8px 0 0; }
.portlets { padding: 10px 4px; display: flex; flex-direction: column; gap: 10px; }
.portlet { display: flex; flex-direction: column; border: 2px solid #a5a5a7; border-radius: 14px; overflow: hidden; background: #e7e8ed; }
.tasks { height: 524px; }
.work { height: 276px; }
.alarms { height: 457px; }
h2 { margin: 0; height: 49px; flex: none; display: flex; align-items: center; padding: 0 12px 0 18px; font: bold 24px/28px "Liberation Sans", Arial, sans-serif; background: linear-gradient(#dfe0e3, #b9bbc0); border-bottom: 1px solid #888; }
h2 .i32 { margin: 0 13px 0 16px; width: 31px; height: 31px; }
.max { width: 20px; height: 18px; margin-left: auto; border: 2px solid #808080; border-top-width: 4px; }
.ptabs { height: 63px; flex: none; display: flex; align-items: flex-end; background: #dadbdf; }
.ptabs button, .ptabs i { height: 50px; padding-bottom: 2px; text-align: center; border-bottom: 2px solid #b0b0b2; }
.ptabs .on { background: #e7e8ed; border: 2px solid #999; border-bottom: 0; border-radius: 12px 12px 0 0; padding-bottom: 0; }
.ptabs i { flex: 1; }
.ptabs::before { content: ""; width: 10px; height: 2px; background: #b0b0b2; }
.three button { width: 148px; }
.three .on { width: 90px; }
.three button:nth-child(2) { width: 176px; }
.three button:nth-child(3) { width: 138px; }
.wide { height: 59px; }
.wide .on { width: 134px; }
.wide button:nth-child(2) { width: 128px; }
.wide button:nth-child(3) { width: 130px; }
.white { flex: 1; background: #fff; }
.links { height: 40px; flex: none; display: flex; justify-content: space-between; padding: 2px 8px 8px 6px; background: #dadbdf; }
.links .drop { gap: 14px; }
.grip { height: 16px; flex: none; display: flex; justify-content: flex-end; align-items: flex-end; }
.grip i { width: 20px; height: 20px; margin: 0 2px 2px 0; background: conic-gradient(#777 90deg, transparent 0) 0 0 / 4px 4px; clip-path: polygon(100% 0, 100% 100%, 0 100%); }
.lines { flex: 1; background: repeating-linear-gradient(transparent 0 45px, #eeeff2 45px 47px); }

.taskbar { height: 13px; flex: none; display: flex; overflow: hidden; background: linear-gradient(90deg, #5a5a5a, #6a6a6a 10%, #555 30%, #5c5c5c 62%, #4e4e4e 80%, #777 96%, #5a5a5a); border-top: 1px solid #3a3a3a; }
.taskbar button { flex: none; }
.taskbar svg { width: 100px; height: 13px; }
.open { background: #7d7d7d; border: 1px solid #aaa; border-bottom: 0; }
.open + .open { margin-left: 1px; }
.blue { background: #5f7f9a; border-color: #85b4d8; }
.lit { background: #939393; border-color: #eee; }
.taskbar .splash { width: 700px; margin-left: 542px; }
</style>
